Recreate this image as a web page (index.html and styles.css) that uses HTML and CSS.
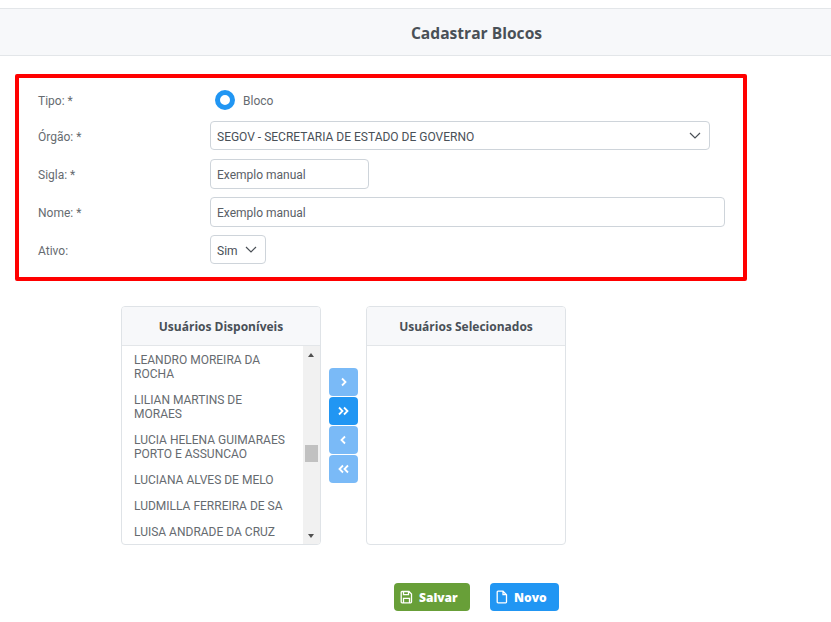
FILE: index.html
```html
<!DOCTYPE html>
<html>
<head>
    <meta charset="utf-8">
    <link rel="stylesheet" href="styles.css">
</head>
<body>
    <div class="page-title"><h1>Cadastrar Blocos</h1></div>

    <form class="form-box">
        <div class="row row-radio">
            <label>Tipo: *</label>
            <div class="radio-wrap"><span class="radio"></span><span class="radio-text">Bloco</span></div>
        </div>
        <div class="row">
            <label>Órgão: *</label>
            <div class="control select select-wide">
                <span>SEGOV - SECRETARIA DE ESTADO DE GOVERNO</span>
                <svg class="chevron" width="12" height="7" viewBox="0 0 12 7"><path d="M1 1l5 5 5-5" fill="none" stroke="#4a5056" stroke-width="1.2"/></svg>
            </div>
        </div>
        <div class="row">
            <label>Sigla: *</label>
            <div class="control tall input-short">Exemplo manual</div>
        </div>
        <div class="row">
            <label>Nome: *</label>
            <div class="control tall input-long">Exemplo manual</div>
        </div>
        <div class="row">
            <label>Ativo:</label>
            <div class="control select select-small">
                <span>Sim</span>
                <svg class="chevron" width="12" height="7" viewBox="0 0 12 7"><path d="M1 1l5 5 5-5" fill="none" stroke="#4a5056" stroke-width="1.2"/></svg>
            </div>
        </div>
    </form>

    <div class="dual-list">
        <div class="panel">
            <div class="panel-head">Usuários Disponíveis</div>
            <div class="panel-body">
                <ul class="users">
                    <li>LEANDRO MOREIRA DA ROCHA</li>
                    <li>LILIAN MARTINS DE MORAES</li>
                    <li>LUCIA HELENA GUIMARAES PORTO E ASSUNCAO</li>
                    <li>LUCIANA ALVES DE MELO</li>
                    <li>LUDMILLA FERREIRA DE SA</li>
                    <li>LUISA ANDRADE DA CRUZ</li>
                </ul>
                <div class="scrollbar">
                    <span class="arrow-up"></span>
                    <span class="thumb"></span>
                    <span class="arrow-down"></span>
                </div>
            </div>
        </div>

        <div class="moves">
            <button type="button" class="move"><svg width="10" height="10" viewBox="0 0 10 10"><path d="M3 1.500L6.500 5 3 8.500" fill="none" stroke="#fff" stroke-width="1.800"/></svg></button>
            <button type="button" class="move active"><svg width="12" height="10" viewBox="0 0 12 10"><path d="M1 1.500L4.500 5 1 8.500M6 1.500L9.500 5 6 8.500" fill="none" stroke="#fff" stroke-width="1.800"/></svg></button>
            <button type="button" class="move"><svg width="10" height="10" viewBox="0 0 10 10"><path d="M6 1.500L2.500 5 6 8.500" fill="none" stroke="#fff" stroke-width="1.800"/></svg></button>
            <button type="button" class="move"><svg width="12" height="10" viewBox="0 0 12 10"><path d="M5 1.500L1.500 5 5 8.500M10 1.500L6.500 5 10 8.500" fill="none" stroke="#fff" stroke-width="1.800"/></svg></button>
        </div>

        <div class="panel">
            <div class="panel-head">Usuários Selecionados</div>
            <div class="panel-body"></div>
        </div>
    </div>

    <div class="actions">
        <button type="button" class="btn btn-save">
            <svg width="13" height="14" viewBox="0 0 13 14"><path d="M2 1.500h7l2.500 2.500v8a.8.8 0 0 1-.8.8H2a.8.8 0 0 1-.8-.8V2.300A.8.8 0 0 1 2 1.500zM3.500 1.500v3.200h5V1.500M3.500 12.800V8.300h6v4.500" fill="none" stroke="#fff" stroke-width="1.300"/></svg>
            Salvar
        </button>
        <button type="button" class="btn btn-new">
            <svg width="12" height="14" viewBox="0 0 12 14"><path d="M2 1.200h5l3.500 3.500v7.300a.8.8 0 0 1-.8.8H2a.8.8 0 0 1-.8-.8V2a.8.8 0 0 1 .8-.8zM7 1.200v3.500h3.500" fill="none" stroke="#fff" stroke-width="1.300"/></svg>
            Novo
        </button>
    </div>
</body>
</html>
```

FILE: styles.css
```css
* {
    box-sizing: border-box;
}

body {
    margin: 0;
    padding-top: 8px;
    background: #fff;
    color: #666b70;
    font-family: 'Roboto', sans-serif;
    font-size: 12px;
}

.page-title {
    height: 48px;
    display: flex;
    align-items: center;
    justify-content: center;
    padding: 1px 0 0 122px;
    background: #f7f8fa;
    border-top: 1px solid #e3e6e9;
    border-bottom: 1px solid #e3e6e9;
}

h1 {
    margin: 0;
    color: #495057;
    font-family: 'Open Sans', sans-serif;
    font-size: 15.6px;
    font-weight: 700;
}

.form-box {
    width: 732px;
    height: 207px;
    margin: 18px 0 0 15px;
    padding: 6px 0 0 19px;
    border: 4px solid #f00;
    border-radius: 2px;
}

.row {
    display: flex;
    align-items: center;
    margin-bottom: 9px;
}

.row-radio {
    height: 32px;
    margin-bottom: 5px;
}

label {
    width: 172px;
    flex: none;
    padding-top: 2px;
}

.radio-wrap {
    display: flex;
    align-items: center;
    gap: 8px;
    padding-left: 5px;
}

.radio {
    width: 20px;
    height: 20px;
    border: 5px solid #2196f3;
    border-radius: 50%;
    background: #fff;
}

.radio-text {
    padding-top: 2px;
}

.control {
    display: flex;
    align-items: center;
    height: 30px;
    padding: 2px 6px 0;
    border: 1px solid #ced4da;
    border-radius: 4px;
    background: #fff;
    color: #5a6066;
}

.tall {
    margin-bottom: -1px;
}

.select {
    justify-content: space-between;
    height: 29px;
    color: #495057;
}

.select-wide {
    width: 500px;
    padding-right: 8px;
}

.select-small {
    width: 56px;
    padding-right: 8px;
}

.chevron {
    margin-top: -2px;
}

.input-short {
    width: 159px;
}

.input-long {
    width: 515px;
}

.dual-list {
    display: flex;
    height: 239px;
    margin: 25px 0 0 121px;
}

.panel {
    width: 200px;
    display: flex;
    flex-direction: column;
    border: 1px solid #dfe3e7;
    border-radius: 4px;
    overflow: hidden;
}

.panel-head {
    height: 39px;
    flex: none;
    display: flex;
    align-items: center;
    justify-content: center;
    padding-top: 1px;
    background: #f7f8fa;
    border-bottom: 1px solid #e3e6e9;
    color: #495057;
    font-family: 'Open Sans', sans-serif;
    font-weight: 700;
}

.panel-body {
    flex: 1;
    display: flex;
    min-height: 0;
}

.users {
    flex: 1;
    margin: 0;
    padding: 1px 0 0 12px;
    list-style: none;
    overflow: hidden;
}

.users li {
    padding: 6px 16px 6px 0;
    line-height: 14px;
}

.scrollbar {
    width: 17px;
    flex: none;
    position: relative;
    background: #f1f1f1;
}

.thumb {
    position: absolute;
    top: 99px;
    left: 2px;
    width: 13px;
    height: 17px;
    background: #c1c1c1;
}

.arrow-up,
.arrow-down {
    position: absolute;
    left: 5px;
    width: 0;
    height: 0;
    border-left: 3.5px solid transparent;
    border-right: 3.5px solid transparent;
}

.arrow-up {
    top: 7px;
    border-bottom: 4px solid #505050;
}

.arrow-down {
    bottom: 6px;
    border-top: 4px solid #505050;
}

.moves {
    width: 45px;
    display: flex;
    flex-direction: column;
    align-items: center;
    padding-top: 62px;
}

.move {
    width: 29px;
    height: 28px;
    margin-bottom: 1px;
    padding: 0;
    display: flex;
    align-items: center;
    justify-content: center;
    border: none;
    border-radius: 4px;
    background: #7abaf7;
}

.move.active {
    background: #2196f3;
}

.actions {
    display: flex;
    gap: 20px;
    margin: 38px 0 0 394px;
}

.btn {
    height: 28px;
    display: flex;
    align-items: center;
    gap: 6px;
    padding: 0 0 0 6px;
    border: none;
    border-radius: 4px;
    color: #fff;
    font-family: 'Open Sans', sans-serif;
    font-size: 12px;
    font-weight: 800;
}

.btn-save {
    width: 76px;
    background: #689f38;
}

.btn-new {
    width: 69px;
    background: #2196f3;
}
```
